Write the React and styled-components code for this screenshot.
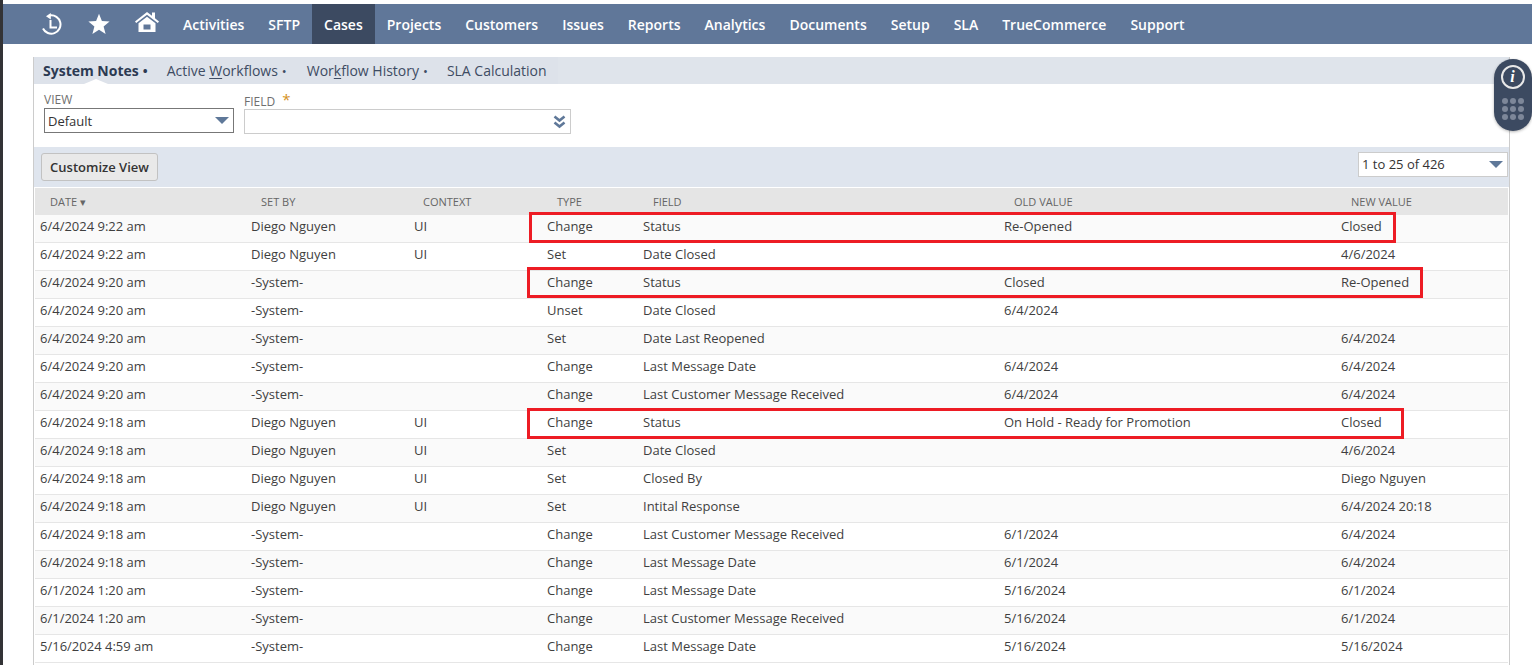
import React from 'react';
import styled, { createGlobalStyle } from 'styled-components';

const Global = createGlobalStyle`
  html, body { margin: 0; padding: 0; background: #fff; overflow: hidden; }
  body { font-family: "Open Sans", "Liberation Sans", sans-serif; font-size: 13px; color: #333; }
`;

const Page = styled.div`
  position: relative;
  width: 1532px;
  height: 665px;
  overflow: hidden;
  display: flex;
`;

const LeftEdge = styled.div`
  width: 3px;
  background: #333336;
  flex: none;
`;

const Main = styled.div`
  flex: 1;
  min-width: 0;
  padding-top: 4px;
`;

const Nav = styled.nav`
  height: 40px;
  background: #607799;
  display: flex;
  align-items: stretch;
  padding-left: 37px;
`;

const IconSlot = styled.div`
  width: ${p => p.$w}px;
  box-sizing: border-box;
  padding-bottom: ${p => p.$pb || 0}px;
  display: flex;
  align-items: center;
  color: #fff;
`;

const NavItem = styled.a`
  display: flex;
  align-items: center;
  padding: 0 12px;
  color: #fff;
  font-size: 14px;
  font-weight: 600;
  background: ${p => (p.$active ? '#3c4a61' : 'transparent')};
`;

const Panel = styled.section`
  position: relative;
  margin: 13px 0 0 30px;
  width: 1477px;
  height: 620px;
  border-left: 1px solid #ccc;
  border-right: 1px solid #ccc;
  box-sizing: border-box;
`;

const Tabs = styled.div`
  height: 27px;
  background: #dfe4eb;
  display: flex;
  align-items: center;
`;

const TabGroup = styled.div`
  height: 27px;
  width: 524px;
  padding-left: 9px;
  box-sizing: border-box;
  display: flex;
  align-items: center;
  background: #dde2ea;
  position: relative;
`;

const Tab = styled.span`
  font-size: 14px;
  color: ${p => (p.$active ? '#2c3a52' : '#3e4c63')};
  font-weight: ${p => (p.$active ? 700 : 400)};
  margin-right: ${p => p.$gap}px;
  white-space: nowrap;
  u { text-underline-offset: 2px; }
`;

const Bullet = styled.span`
  font-size: 13px;
  margin-left: 4px;
`;

const TabNotch = styled.div`
  position: absolute;
  left: 50px;
  bottom: 0;
  width: 0;
  height: 0;
  border-left: 12px solid transparent;
  border-right: 12px solid transparent;
  border-bottom: 5px solid #fff;
`;

const FormRow = styled.div`
  height: 63px;
  display: flex;
  padding-left: 10px;
  gap: 10px;
  box-sizing: border-box;
`;

const Field = styled.div`
  display: flex;
  flex-direction: column;
  width: ${p => p.$w}px;
  padding-top: ${p => p.$top}px;
`;

const FieldLabel = styled.label`
  font-size: 12px;
  line-height: 14px;
  color: #6f6f6f;
  box-sizing: border-box;
  height: ${p => p.$h}px;
  padding-top: ${p => p.$pt}px;
  display: flex;
  gap: 7px;
`;

const Required = styled.span`
  color: #d5921c;
  font-size: 15px;
  line-height: 12px;
  margin-top: -2px;
`;

const SelectBox = styled.div`
  height: ${p => p.$h}px;
  box-sizing: border-box;
  border: ${p => p.$dark ? '1px solid #777' : '1px solid #ccc'};
  background: #fff;
  display: flex;
  align-items: center;
  justify-content: space-between;
  padding: 0 4px 0 3px;
  font-size: 13px;
  color: #333;
`;

const Caret = styled.span`
  width: 0;
  height: 0;
  border-left: 7px solid transparent;
  border-right: 7px solid transparent;
  border-top: 7px solid #5f7899;
`;

const Toolbar = styled.div`
  height: 40px;
  background: #dfe5ee;
  display: flex;
  align-items: center;
  justify-content: space-between;
  padding: 0 0 0 7px;
`;

const CustomizeButton = styled.button`
  height: 28px;
  width: 117px;
  padding: 0;
  border: 1px solid #c2c2c2;
  border-radius: 3px;
  background: #e9e9e9;
  color: #333;
  font-family: inherit;
  font-size: 13px;
  font-weight: 600;
`;

const Pager = styled(SelectBox)`
  width: 150px;
  margin-right: 1px;
  position: relative;
  top: -3px;
`;

const Table = styled.div`
  position: relative;
  margin: 1px 1px 0 1px;
`;

const columns = '210px 163px 133px 96px 361px 337px 1fr';

const HeadRow = styled.div`
  display: grid;
  grid-template-columns: ${columns};
  height: 27px;
  align-items: center;
  background: #e5e5e5;
`;

const HeadCell = styled.div`
  padding-left: 16px;
  font-size: 11px;
  color: #666;
  text-transform: uppercase;

  &:first-child,
  &:nth-child(3) {
    padding-left: 15px;
  }
`;

const Row = styled.div`
  display: grid;
  grid-template-columns: ${columns};
  height: 28px;
  box-sizing: border-box;
  padding-bottom: 6px;
  align-items: center;
  background: ${p => (p.$odd ? '#fafafa' : '#fff')};
  border-bottom: 1px solid #e6e6e6;
`;

const Cell = styled.div`
  padding-left: 6px;
  font-size: 13px;
  color: #3f3f3f;
  white-space: nowrap;

  &:first-child {
    padding-left: 5px;
  }
`;

const Highlight = styled.div`
  position: absolute;
  left: ${p => p.$x}px;
  top: ${p => p.$y}px;
  width: ${p => p.$w}px;
  height: ${p => p.$h}px;
  border: 3px solid #ed1c24;
  box-sizing: border-box;
`;

const Widget = styled.div`
  position: absolute;
  left: 1494px;
  top: 59px;
  width: 38px;
  height: 72px;
  background: #3c4a61;
  border-radius: 19px;
  box-shadow: 0 1px 3px rgba(0, 0, 0, 0.3);
  display: flex;
  flex-direction: column;
  align-items: center;
  padding-top: 6px;
  box-sizing: border-box;
`;

const InfoCircle = styled.div`
  width: 20px;
  height: 20px;
  margin-left: -1px;
  border: 2px solid #e8e8e8;
  border-radius: 50%;
  color: #fff;
  font-family: "Liberation Serif", serif;
  font-style: italic;
  font-weight: 700;
  font-size: 16px;
  line-height: 20px;
  text-align: center;
`;

const Dots = styled.div`
  margin-top: 9px;
  display: grid;
  grid-template-columns: repeat(3, 6px);
  gap: 2px;
`;

const Dot = styled.span`
  width: 6px;
  height: 6px;
  border-radius: 50%;
  background: #7d8799;
`;

const HistoryIcon = () => (
  <svg width="22" height="22" viewBox="0 0 22 22" fill="none" stroke="#fff" strokeWidth="2">
    <path d="M10 2.4 A9.2 9.2 0 1 1 3 15.5" />
    <path d="M10.8 0 V6.4 L6 3.2 Z" fill="#fff" stroke="none" />
    <path d="M10.5 7 V14.5 H17" />
  </svg>
);

const StarIcon = () => (
  <svg width="22" height="22" viewBox="0 0 22 22" fill="#fff">
    <path d="M11 .8 L13.9 8 L21.6 8.5 L15.6 13.4 L17.6 21 L11 16.8 L4.4 21 L6.4 13.4 L.4 8.5 L8.1 8 Z" />
  </svg>
);

const HomeIcon = () => (
  <svg width="24" height="22" viewBox="0 0 24 22" fill="#fff">
    <path d="M12 1 L17 4.8 V1.6 H20 V7.2 L24 10.4 L22.8 12 L12 3.8 L1.2 12 L0 10.4 Z" />
    <path fillRule="evenodd" d="M12 5.8 L20.5 12.2 V21 H3.5 V12.2 Z M8.5 13.5 V18.5 H15.5 V13.5 Z" />
  </svg>
);

const DoubleChevron = () => (
  <svg width="13" height="14" viewBox="0 0 13 14" fill="none" stroke="#5f7899" strokeWidth="2.6">
    <path d="M1.5 1.5 L6.5 5.5 L11.5 1.5" />
    <path d="M1.5 7.5 L6.5 11.5 L11.5 7.5" />
  </svg>
);

const navItems = ['Activities', 'SFTP', 'Cases', 'Projects', 'Customers', 'Issues', 'Reports', 'Analytics', 'Documents', 'Setup', 'SLA', 'TrueCommerce', 'Support'];
const headers = ['Date ▾', 'Set By', 'Context', 'Type', 'Field', 'Old Value', 'New Value'];

const DN = 'Diego Nguyen';
const SYS = '-System-';
const rows = [
  ['6/4/2024 9:22 am', DN, 'UI', 'Change', 'Status', 'Re-Opened', 'Closed'],
  ['6/4/2024 9:22 am', DN, 'UI', 'Set', 'Date Closed', '', '4/6/2024'],
  ['6/4/2024 9:20 am', SYS, '', 'Change', 'Status', 'Closed', 'Re-Opened'],
  ['6/4/2024 9:20 am', SYS, '', 'Unset', 'Date Closed', '6/4/2024', ''],
  ['6/4/2024 9:20 am', SYS, '', 'Set', 'Date Last Reopened', '', '6/4/2024'],
  ['6/4/2024 9:20 am', SYS, '', 'Change', 'Last Message Date', '6/4/2024', '6/4/2024'],
  ['6/4/2024 9:20 am', SYS, '', 'Change', 'Last Customer Message Received', '6/4/2024', '6/4/2024'],
  ['6/4/2024 9:18 am', DN, 'UI', 'Change', 'Status', 'On Hold - Ready for Promotion', 'Closed'],
  ['6/4/2024 9:18 am', DN, 'UI', 'Set', 'Date Closed', '', '4/6/2024'],
  ['6/4/2024 9:18 am', DN, 'UI', 'Set', 'Closed By', '', DN],
  ['6/4/2024 9:18 am', DN, 'UI', 'Set', 'Intital Response', '', '6/4/2024 20:18'],
  ['6/4/2024 9:18 am', SYS, '', 'Change', 'Last Customer Message Received', '6/1/2024', '6/4/2024'],
  ['6/4/2024 9:18 am', SYS, '', 'Change', 'Last Message Date', '6/1/2024', '6/4/2024'],
  ['6/1/2024 1:20 am', SYS, '', 'Change', 'Last Message Date', '5/16/2024', '6/1/2024'],
  ['6/1/2024 1:20 am', SYS, '', 'Change', 'Last Customer Message Received', '5/16/2024', '6/1/2024'],
  ['5/16/2024 4:59 am', SYS, '', 'Change', 'Last Message Date', '5/16/2024', '5/16/2024'],
];

export default function App() {
  return (
    <Page>
      <Global />
      <LeftEdge />
      <Main>
        <Nav>
          <IconSlot $w={48}><HistoryIcon /></IconSlot>
          <IconSlot $w={47}><StarIcon /></IconSlot>
          <IconSlot $w={36} $pb={4}><HomeIcon /></IconSlot>
          {navItems.map(n => (
            <NavItem key={n} $active={n === 'Cases'}>{n}</NavItem>
          ))}
        </Nav>
        <Panel>
          <Tabs>
            <TabGroup>
              <Tab $active $gap={19}>System Notes<Bullet>•</Bullet></Tab>
              <Tab $gap={20}>Active <u>W</u>orkflows<Bullet>•</Bullet></Tab>
              <Tab $gap={19}>Wor<u>k</u>flow History<Bullet>•</Bullet></Tab>
              <Tab $gap={0}>SLA Calculation</Tab>
              <TabNotch />
            </TabGroup>
          </Tabs>
          <FormRow>
            <Field $w={190} $top={8}>
              <FieldLabel $h={16} $pt={1}>VIEW</FieldLabel>
              <SelectBox $h={25} $dark>Default<Caret /></SelectBox>
            </Field>
            <Field $w={327} $top={9}>
              <FieldLabel $h={16} $pt={2}>FIELD <Required>*</Required></FieldLabel>
              <SelectBox $h={25}><span /><DoubleChevron /></SelectBox>
            </Field>
          </FormRow>
          <Toolbar>
            <CustomizeButton>Customize View</CustomizeButton>
            <Pager $h={25}>1 to 25 of 426<Caret /></Pager>
          </Toolbar>
          <Table>
            <HeadRow>
              {headers.map(h => <HeadCell key={h}>{h}</HeadCell>)}
            </HeadRow>
            {rows.map((r, i) => (
              <Row key={i} $odd={i % 2 === 0}>
                {r.map((c, j) => <Cell key={j}>{c}</Cell>)}
              </Row>
            ))}
            <Highlight $x={494} $y={24} $w={867} $h={31} />
            <Highlight $x={492} $y={79} $w={896} $h={31} />
            <Highlight $x={492} $y={220} $w={877} $h={31} />
          </Table>
        </Panel>
      </Main>
      <Widget>
        <InfoCircle>i</InfoCircle>
        <Dots>
          {Array.from({ length: 9 }).map((_, i) => <Dot key={i} />)}
        </Dots>
      </Widget>
    </Page>
  );
}
